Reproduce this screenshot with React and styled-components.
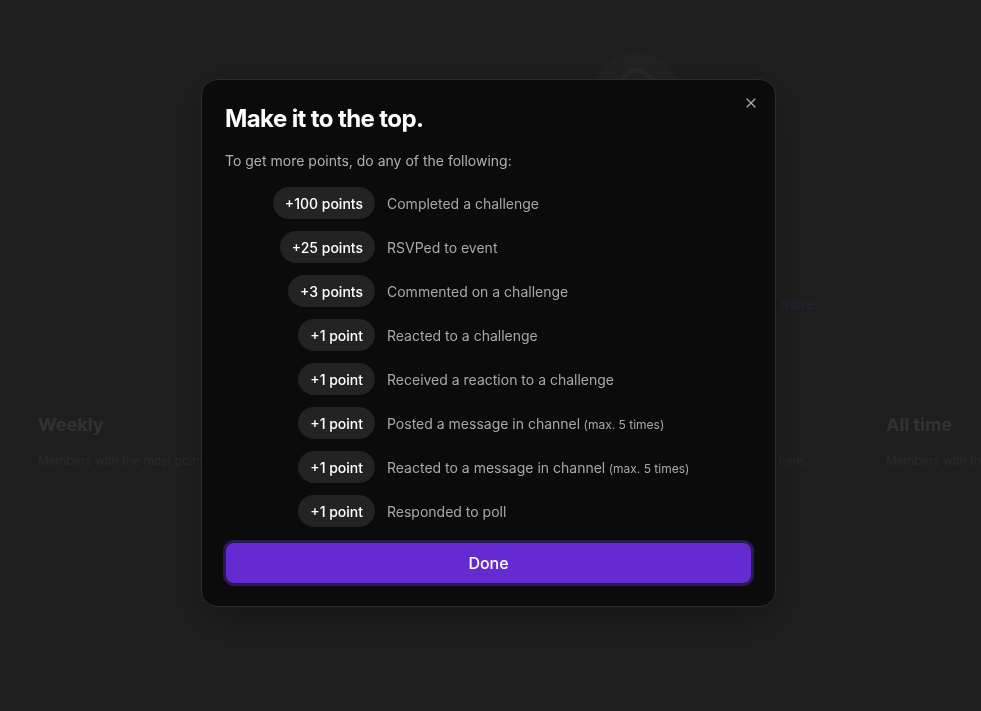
import React from "react";
import styled, { createGlobalStyle } from "styled-components";
import { X } from "lucide-react";

const rewards = [
  { points: "+100 points", label: "Completed a challenge" },
  { points: "+25 points", label: "RSVPed to event" },
  { points: "+3 points", label: "Commented on a challenge" },
  { points: "+1 point", label: "Reacted to a challenge" },
  { points: "+1 point", label: "Received a reaction to a challenge" },
  { points: "+1 point", label: "Posted a message in channel", note: "(max. 5 times)" },
  { points: "+1 point", label: "Reacted to a message in channel", note: "(max. 5 times)" },
  { points: "+1 point", label: "Responded to poll" },
];

const boards = [
  { title: "Weekly", text: "Members with the most points this week appear here." },
  { title: "Monthly", text: "Members with the most points in this month will appear here." },
  { title: "All time", text: "Members with the most points" },
];

export default function App() {
  return (
    <>
      <GlobalStyle />
      <Page>
        <EmptyState>
          <Ghost>
            <GhostInner />
          </Ghost>
          <EmptyTitle>No points yet</EmptyTitle>
          <EmptyText>
            Join challenges and events to earn points. <MoreLink>Read more</MoreLink>
          </EmptyText>
        </EmptyState>
        <Boards>
          {boards.map((b) => (
            <Board key={b.title}>
              <BoardTitle>{b.title}</BoardTitle>
              <BoardText>{b.text}</BoardText>
            </Board>
          ))}
        </Boards>
      </Page>

      <Backdrop>
        <Dialog>
          <CloseButton aria-label="Close">
            <X size={16} strokeWidth={1.75} />
          </CloseButton>
          <Title>Make it to the top.</Title>
          <Subtitle>To get more points, do any of the following:</Subtitle>
          <List>
            {rewards.map((r, i) => (
              <Row key={i}>
                <BadgeCell>
                  <Badge>{r.points}</Badge>
                </BadgeCell>
                <Label>
                  {r.label}
                  {r.note && <Note> {r.note}</Note>}
                </Label>
              </Row>
            ))}
          </List>
          <DoneButton>Done</DoneButton>
        </Dialog>
      </Backdrop>
    </>
  );
}

const GlobalStyle = createGlobalStyle`
  html, body {
    margin: 0;
    padding: 0;
    background: #383838;
    font-family: Inter, "Noto Sans", sans-serif;
    overflow: hidden;
  }
  * { box-sizing: border-box; }
`;

const Page = styled.div`
  width: 981px;
  height: 711px;
  overflow: hidden;
  padding-top: 52px;
`;

const EmptyState = styled.div`
  display: flex;
  flex-direction: column;
  align-items: center;
  margin-left: 200px;
  width: 874px;
`;

const Ghost = styled.div`
  width: 90px;
  height: 90px;
  border-radius: 50%;
  background: #3e3e3e;
  display: flex;
  justify-content: center;
  padding-top: 16px;
`;

const GhostInner = styled.div`
  width: 34px;
  height: 34px;
  border-radius: 50%;
  border: 5px solid #484848;
`;

const EmptyTitle = styled.div`
  margin-top: 90px;
  font-size: 18px;
  font-weight: 600;
  color: #555555;
`;

const EmptyText = styled.div`
  margin-top: 42px;
  font-size: 14px;
  color: #474747;
`;

const MoreLink = styled.span`
  color: #483d72;
`;

const Boards = styled.div`
  display: grid;
  grid-template-columns: repeat(3, 376px);
  column-gap: 48px;
  padding-left: 38px;
  margin-top: 102px;
`;

const Board = styled.div`
  display: flex;
  flex-direction: column;
  gap: 18px;
`;

const BoardTitle = styled.div`
  font-size: 18px;
  font-weight: 700;
  color: #5b5b5b;
  white-space: nowrap;
`;

const BoardText = styled.div`
  font-size: 12px;
  color: #4c4c4c;
  white-space: nowrap;
`;

const Backdrop = styled.div`
  position: fixed;
  inset: 0;
  background: rgba(0, 0, 0, 0.45);
  display: flex;
  justify-content: center;
  align-items: flex-start;
  padding: 79px 4px 0 0;
`;

const Dialog = styled.div`
  position: relative;
  width: 575px;
  background: #0b0b0b;
  border: 1px solid #2c2c2c;
  border-radius: 16px;
  padding: 23px;
  box-shadow: 0 12px 40px rgba(0, 0, 0, 0.3);
  display: flex;
  flex-direction: column;
`;

const CloseButton = styled.button`
  position: absolute;
  top: 15px;
  right: 16px;
  width: 16px;
  height: 16px;
  padding: 0;
  border: none;
  background: transparent;
  color: #b0b0b0;
  display: flex;
  cursor: pointer;
`;

const Title = styled.h2`
  margin: 0;
  font-size: 24px;
  line-height: 32px;
  font-weight: 700;
  letter-spacing: -0.6px;
  color: #ffffff;
`;

const Subtitle = styled.p`
  margin: 16px 0 0;
  font-size: 14px;
  line-height: 20px;
  color: #b0b0b0;
`;

const List = styled.div`
  margin-top: 16px;
  display: flex;
  flex-direction: column;
  gap: 12px;
`;

const Row = styled.div`
  display: grid;
  grid-template-columns: 150px 1fr;
  column-gap: 12px;
  align-items: center;
`;

const BadgeCell = styled.div`
  display: flex;
  justify-content: flex-end;
`;

const Badge = styled.span`
  height: 32px;
  padding: 0 12px;
  border-radius: 16px;
  background: #232323;
  color: #ffffff;
  font-size: 14px;
  font-weight: 500;
  display: inline-flex;
  align-items: center;
`;

const Label = styled.span`
  font-size: 14px;
  color: #a8a8a8;
`;

const Note = styled.span`
  font-size: 12px;
`;

const DoneButton = styled.button`
  margin: 16px 1px 0;
  height: 40px;
  border: none;
  border-radius: 8px;
  background: #662ad1;
  box-shadow: 0 0 0 3px #2a1a52;
  color: #ffffff;
  font-family: Inter, "Noto Sans", sans-serif;
  font-size: 16px;
  font-weight: 500;
  cursor: pointer;
`;
